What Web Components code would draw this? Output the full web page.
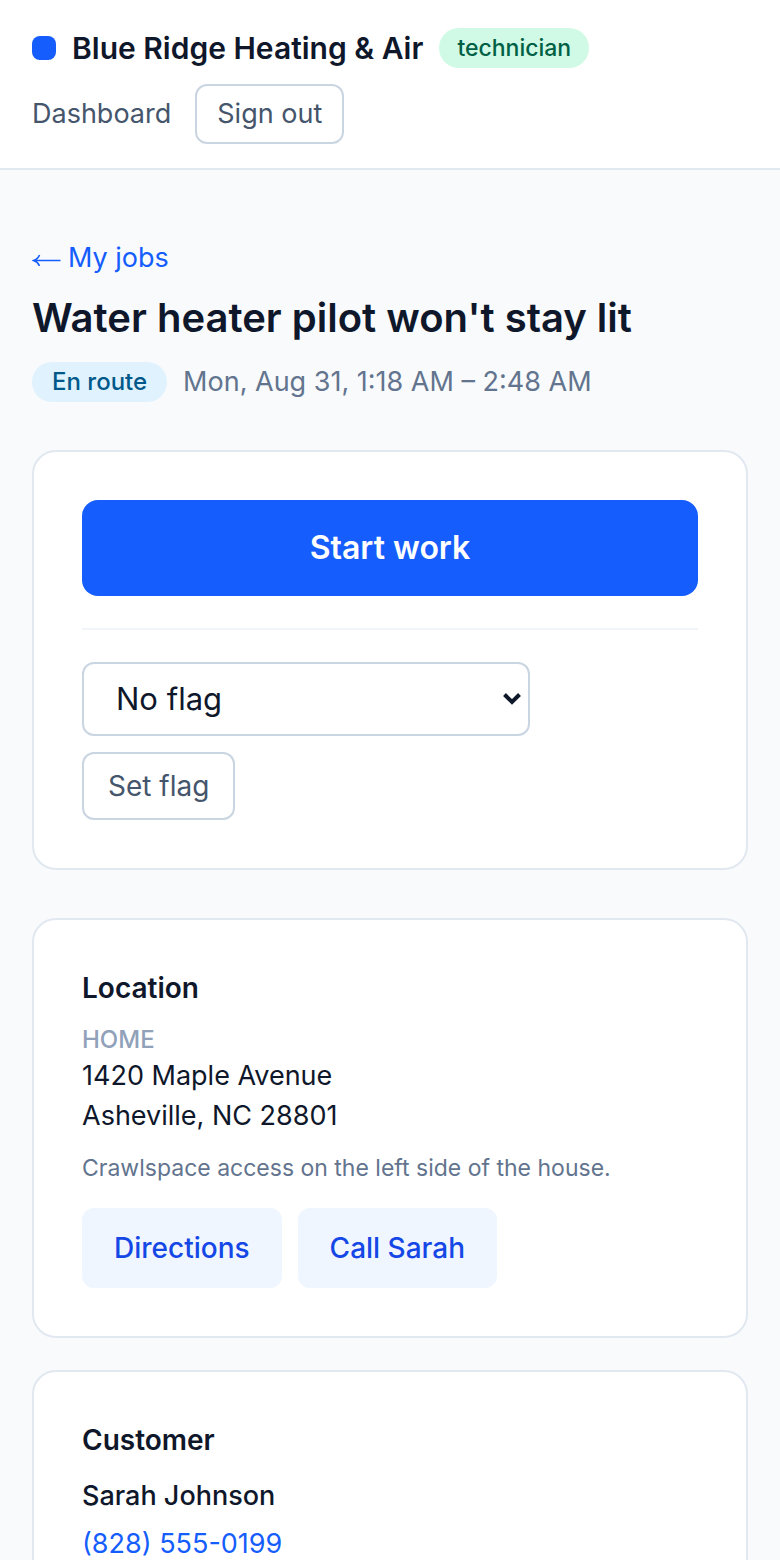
<!DOCTYPE html>
<html lang="en">
<head>
<meta charset="utf-8">
<meta name="viewport" content="width=device-width, initial-scale=1">
<title>Water heater pilot won't stay lit</title>
<style>
	:root {
		--ink: #0f172b;
		--body: #45556c;
		--muted: #62748e;
		--faint: #90a1b9;
		--line: #e2e8f0;
		--line-strong: #cad5e2;
		--blue: #155dfc;
	}
	body {
		margin: 0;
		background: #f8fafc;
		color: var(--ink);
		font: 27px/40px Inter, "Liberation Sans", sans-serif;
	}
</style>
</head>
<body>
<app-shell>
	<app-header slot="header" name="Blue Ridge Heating &amp; Air" role-name="technician"></app-header>
	<job-heading status="En route" when="Mon, Aug 31, 1:18 AM – 2:48 AM">Water heater pilot won't stay lit</job-heading>
	<info-card>
		<job-actions></job-actions>
	</info-card>
	<card-stack>
		<info-card heading="Location">
			<job-location label="Home" note="Crawlspace access on the left side of the house." contact="Sarah" tel="+18285550199">
				<span>1420 Maple Avenue</span>
				<span>Asheville, NC 28801</span>
			</job-location>
		</info-card>
		<info-card heading="Customer">
			<customer-contact name="Sarah Johnson" phone="(828) 555-0199"></customer-contact>
		</info-card>
	</card-stack>
</app-shell>

<script>
class AppShell extends HTMLElement {
	constructor() {
		super();
		this.attachShadow({mode: 'open'}).innerHTML = `
		<style>
			:host {
				display: block;
				height: 100vh;
				overflow-y: auto;
				scrollbar-width: none;
			}
			main {
				display: flex;
				flex-direction: column;
				gap: 48px;
				padding: 64px 32px;
			}
		</style>
		<slot name="header"></slot>
		<main><slot></slot></main>
		`;
	}
}

class AppHeader extends HTMLElement {
	connectedCallback() {
		if (this.shadowRoot) return;
		this.attachShadow({mode: 'open'}).innerHTML = `
		<style>
			:host {
				display: block;
				background: #fff;
				border-bottom: 2px solid var(--line);
			}
			header {
				display: flex;
				flex-wrap: wrap;
				justify-content: space-between;
				gap: 12px 24px;
				padding: 24px 32px;
			}
			.brand, nav {
				display: flex;
				align-items: center;
			}
			.brand { gap: 16px; }
			nav { gap: 24px; }
			.logo {
				width: 24px;
				height: 24px;
				border-radius: 8px;
				background: var(--blue);
			}
			.name {
				font-size: 30px;
				line-height: 48px;
				font-weight: 600;
			}
			a {
				color: var(--body);
				text-decoration: none;
			}
			button {
				padding: 8px 20px;
				border: 2px solid var(--line-strong);
				border-radius: 12px;
				background: #fff;
				color: var(--body);
				font: inherit;
			}
		</style>
		<header>
			<div class="brand">
				<span class="logo"></span>
				<span class="name"></span>
				<status-pill tone="green">${this.getAttribute('role-name')}</status-pill>
			</div>
			<nav>
				<a href="#dashboard">Dashboard</a>
				<button type="button">Sign out</button>
			</nav>
		</header>
		`;
		this.shadowRoot.querySelector('.name').textContent = this.getAttribute('name');
	}
}

class StatusPill extends HTMLElement {
	constructor() {
		super();
		this.attachShadow({mode: 'open'}).innerHTML = `
		<style>
			:host {
				display: inline-block;
				padding: 4px 20px;
				border-radius: 20px;
				background: #dff2fe;
				color: #00598a;
				font-size: 24px;
				line-height: 32px;
				font-weight: 500;
				white-space: nowrap;
			}
			:host([tone="green"]) {
				padding: 4px 18px;
				background: #d0fae5;
				color: #006045;
				font-size: 23px;
			}
		</style>
		<slot></slot>
		`;
	}
}

class JobHeading extends HTMLElement {
	connectedCallback() {
		if (this.shadowRoot) return;
		this.attachShadow({mode: 'open'}).innerHTML = `
		<style>
			:host { display: block; }
			a {
				display: inline-flex;
				align-items: center;
				gap: 6px;
				line-height: 48px;
				color: var(--blue);
				text-decoration: none;
				vertical-align: top;
			}
			h1 {
				margin: 8px 0 16px;
				font-size: 40px;
				line-height: 56px;
				font-weight: 600;
			}
			.meta {
				display: flex;
				flex-wrap: wrap;
				align-items: center;
				gap: 16px;
				color: var(--muted);
			}
		</style>
		<a href="#jobs">
			<svg width="30" height="16" viewBox="0 0 30 16" fill="none" stroke="currentColor" stroke-width="1.6" role="img" aria-label="←">
				<path d="M2 10.5H28.5M7.5 5Q6 9 1.5 10.5Q6 12 7.5 16"/>
			</svg>
			<span>My jobs</span>
		</a>
		<h1><slot></slot></h1>
		<div class="meta">
			<status-pill>${this.getAttribute('status')}</status-pill>
			<span>${this.getAttribute('when')}</span>
		</div>
		`;
	}
}

class CardStack extends HTMLElement {
	constructor() {
		super();
		this.attachShadow({mode: 'open'}).innerHTML = `
		<style>
			:host {
				display: grid;
				gap: 32px;
			}
		</style>
		<slot></slot>
		`;
	}
}

class InfoCard extends HTMLElement {
	connectedCallback() {
		if (this.shadowRoot) return;
		const heading = this.getAttribute('heading');
		this.attachShadow({mode: 'open'}).innerHTML = `
		<style>
			:host {
				display: block;
				padding: 48px;
				border: 2px solid var(--line);
				border-radius: 24px;
				background: #fff;
			}
			h2 {
				margin: 0 0 16px;
				font-size: 28px;
				line-height: 40px;
				font-weight: 600;
			}
		</style>
		${heading ? `<h2>${heading}</h2>` : ''}
		<slot></slot>
		`;
	}
}

class JobActions extends HTMLElement {
	constructor() {
		super();
		this.attachShadow({mode: 'open'}).innerHTML = `
		<style>
			:host { display: block; }
			button { font: inherit; }
			.primary {
				width: 100%;
				padding: 24px;
				border: 0;
				border-radius: 16px;
				background: var(--blue);
				color: #fff;
				font-size: 32px;
				line-height: 48px;
				font-weight: 600;
			}
			form {
				display: flex;
				flex-direction: column;
				align-items: flex-start;
				gap: 16px;
				margin-top: 32px;
				padding-top: 32px;
				border-top: 2px solid #f1f5f9;
			}
			/* select and chevron share one grid cell */
			.select {
				display: grid;
				align-items: center;
				width: 448px;
				max-width: 100%;
			}
			.select > * { grid-area: 1 / 1; }
			select {
				width: 100%;
				padding: 11px 32px;
				border: 2px solid var(--line-strong);
				border-radius: 12px;
				background: #fff;
				color: var(--ink);
				font: inherit;
				font-size: 31px;
				line-height: 48px;
				appearance: none;
			}
			svg {
				justify-self: end;
				margin-right: 8px;
				pointer-events: none;
			}
			.flag {
				padding: 12px 24px;
				border: 2px solid var(--line-strong);
				border-radius: 12px;
				background: #fff;
				color: var(--body);
				font-size: 28px;
			}
		</style>
		<button class="primary" type="button">Start work</button>
		<form>
			<div class="select">
				<select name="flag" aria-label="Flag">
					<option>No flag</option>
				</select>
				<svg width="20" height="14" viewBox="0 0 20 14" fill="none" stroke="#0f172b" stroke-width="4" aria-hidden="true">
					<path d="M2.5 2.5 10 10 17.5 2.5"/>
				</svg>
			</div>
			<button class="flag" type="button">Set flag</button>
		</form>
		`;
	}
}

class JobLocation extends HTMLElement {
	connectedCallback() {
		if (this.shadowRoot) return;
		this.attachShadow({mode: 'open'}).innerHTML = `
		<style>
			:host { display: block; }
			p { margin: 0; }
			.label {
				color: var(--faint);
				font-size: 24px;
				line-height: 32px;
				font-weight: 500;
				text-transform: uppercase;
			}
			::slotted(span) { display: block; }
			.note {
				margin: 16px 0 24px;
				color: var(--muted);
				font-size: 23px;
				line-height: 32px;
			}
			.links {
				display: flex;
				flex-wrap: wrap;
				gap: 16px;
			}
			a {
				padding: 20px 32px;
				border-radius: 12px;
				background: #eff6ff;
				color: #1447e6;
				font-size: 28px;
				font-weight: 500;
				text-decoration: none;
			}
		</style>
		<p class="label">${this.getAttribute('label')}</p>
		<slot></slot>
		<p class="note">${this.getAttribute('note')}</p>
		<div class="links">
			<a href="#directions">Directions</a>
			<a href="tel:${this.getAttribute('tel')}">Call ${this.getAttribute('contact')}</a>
		</div>
		`;
	}
}

class CustomerContact extends HTMLElement {
	connectedCallback() {
		if (this.shadowRoot) return;
		const phone = this.getAttribute('phone');
		this.attachShadow({mode: 'open'}).innerHTML = `
		<style>
			:host {
				display: grid;
				justify-items: start;
				gap: 8px;
			}
			.name { font-weight: 500; }
			a {
				color: var(--blue);
				text-decoration: none;
			}
		</style>
		<span class="name">${this.getAttribute('name')}</span>
		<a href="tel:${phone.replace(/\D/g, '')}">${phone}</a>
		`;
	}
}

customElements.define('app-shell', AppShell);
customElements.define('app-header', AppHeader);
customElements.define('status-pill', StatusPill);
customElements.define('job-heading', JobHeading);
customElements.define('card-stack', CardStack);
customElements.define('info-card', InfoCard);
customElements.define('job-actions', JobActions);
customElements.define('job-location', JobLocation);
customElements.define('customer-contact', CustomerContact);
</script>
</body>
</html>
